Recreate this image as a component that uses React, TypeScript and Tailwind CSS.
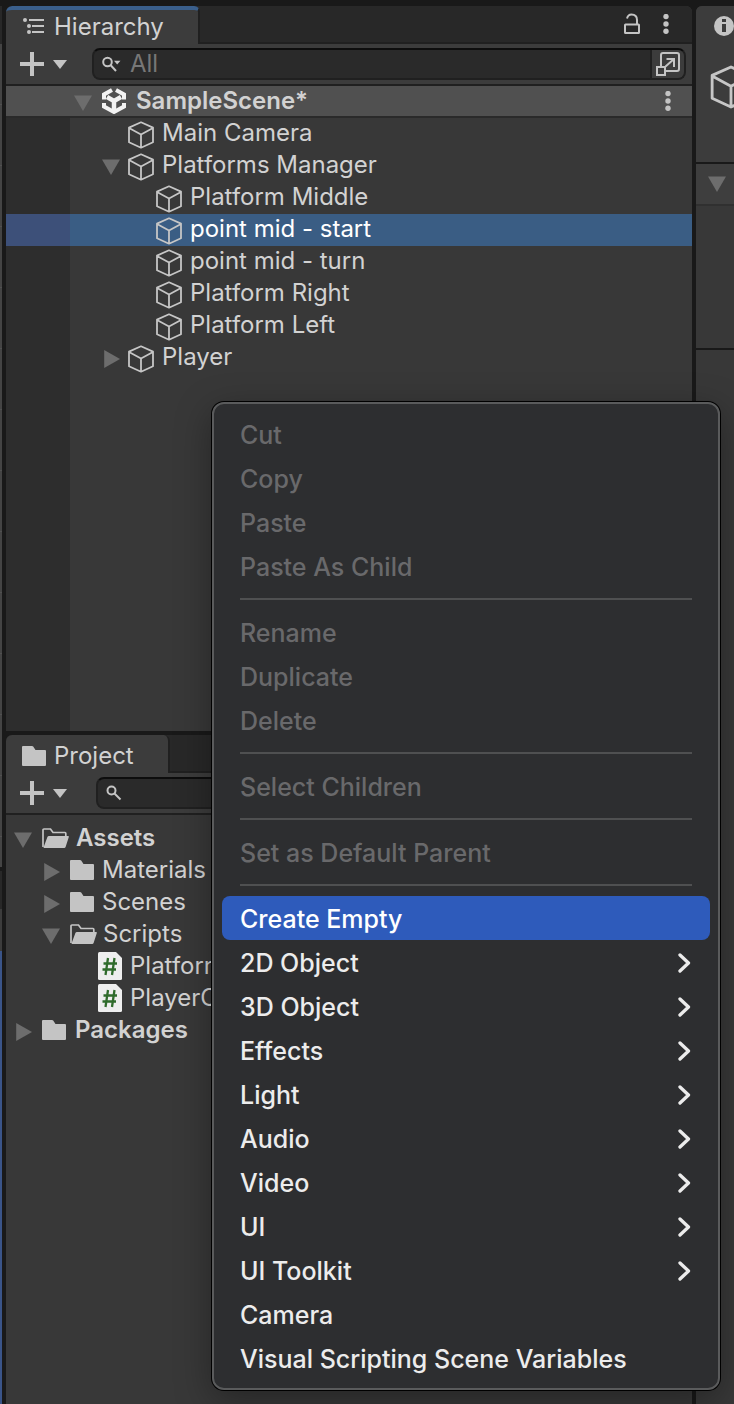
import type { ReactNode } from "react";

function Caret({ open, className = "" }: { open: boolean; className?: string }) {
  return (
    <svg viewBox="0 0 18 18" className={`size-[18px] shrink-0 fill-[#6d6d6d] ${className}`} aria-hidden="true">
      <path d={open ? "M0 1.5h18L9 17z" : "M2.2 0v18L18 9z"} />
    </svg>
  );
}

function Cube({ className }: { className: string }) {
  return (
    <svg viewBox="0 0 28 28" className={`shrink-0 ${className}`} fill="none" stroke="#c6c6c6" strokeWidth="1.8" strokeLinejoin="round" aria-hidden="true">
      <path d="M14 1.3 26 6.6v14.6L14 26.7 2 21.2V6.6zM2 7l12 6.500L26 7M14 13.500v13" />
    </svg>
  );
}

function Folder() {
  return (
    <svg viewBox="0 0 26 22" className="h-[22px] w-[26px] shrink-0" fill="#c4c4c4" aria-hidden="true">
      <path d="M2 1h9q.8 0 1.200.6L14.500 5H24q1 0 1 1v14q0 1-1 1H2q-1 0-1-1V2q0-1 1-1z" />
    </svg>
  );
}

function FolderOpen() {
  return (
    <svg viewBox="0 0 28 22" className="h-[22px] w-7 shrink-0" aria-hidden="true">
      <path d="M2 20V3q0-1 1-1h6.500l2.500 3.500H24q.8 0 .8 1V9" fill="none" stroke="#c4c4c4" strokeWidth="1.700" />
      <path d="M8 9h19q1.200 0 .8 1.100L24.600 20q-.4 1-1.400 1H3.500q-1.200 0-.8-1.100L6.400 10Q6.800 9 8 9z" fill="#c4c4c4" />
    </svg>
  );
}

function Script() {
  return (
    <svg viewBox="0 0 24 28" className="h-7 w-6 shrink-0" aria-hidden="true">
      <path d="M1.500 0H18l6 6v20.500q0 1.500-1.500 1.500h-21Q0 28 0 26.500v-25Q0 0 1.500 0z" fill="#eeeeee" />
      <path d="M10 6 7.500 23M16.500 6 14 23M5.500 11.500H19M4.500 17.500H18" fill="none" stroke="#2f6b2b" strokeWidth="2.300" />
    </svg>
  );
}

function Kebab() {
  return (
    <svg viewBox="0 0 6 20" className="h-5 w-[6px] fill-[#c4c4c4]" aria-hidden="true">
      <circle cx="3" cy="2.500" r="2.700" />
      <circle cx="3" cy="10" r="2.700" />
      <circle cx="3" cy="17.300" r="2.700" />
    </svg>
  );
}

function AddButton() {
  return (
    <button type="button" aria-label="Add" className="flex h-8 items-center gap-[9px]">
      <svg viewBox="0 0 24 24" className="size-6 fill-[#c4c4c4]" aria-hidden="true">
        <path d="M10 0h4v10h10v4H14v10h-4V14H0v-4h10z" />
      </svg>
      <svg viewBox="0 0 14 9" className="h-[9px] w-[14px] fill-[#c4c4c4]" aria-hidden="true">
        <path d="M0 0h14L7 9z" />
      </svg>
    </button>
  );
}

function TreeRow({
  level,
  caret,
  icon,
  label,
  bold = false,
  selected = false,
}: {
  level: string;
  caret?: "open" | "closed";
  icon: ReactNode;
  label: string;
  bold?: boolean;
  selected?: boolean;
}) {
  return (
    <li className={`flex h-8 items-center ${level} ${selected ? "bg-[#3a5d84] text-white" : ""}`}>
      <span className="flex w-7 shrink-0 items-center">
        {caret && <Caret open={caret === "open"} className="mt-1" />}
      </span>
      {icon}
      <span className={`whitespace-nowrap ${bold ? "font-semibold" : ""}`}>{label}</span>
    </li>
  );
}

const objects: { label: string; level: string; caret?: "open" | "closed"; selected?: boolean }[] = [
  { label: "Main Camera", level: "pb-[2px] pl-8" },
  { label: "Platforms Manager", level: "pb-[2px] pl-8", caret: "open" },
  { label: "Platform Middle", level: "pb-[2px] pl-[60px]" },
  { label: "point mid - start", level: "pb-[2px] pl-[60px]", selected: true },
  { label: "point mid - turn", level: "pb-[2px] pl-[60px]" },
  { label: "Platform Right", level: "pb-[2px] pl-[60px]" },
  { label: "Platform Left", level: "pb-[2px] pl-[60px]" },
  { label: "Player", level: "pb-[2px] pl-8", caret: "closed" },
];

const menu: { items: string[]; disabled?: boolean }[] = [
  { items: ["Cut", "Copy", "Paste", "Paste As Child"], disabled: true },
  { items: ["Rename", "Duplicate", "Delete"], disabled: true },
  { items: ["Select Children"], disabled: true },
  { items: ["Set as Default Parent"], disabled: true },
  {
    items: [
      "Create Empty",
      "2D Object",
      "3D Object",
      "Effects",
      "Light",
      "Audio",
      "Video",
      "UI",
      "UI Toolkit",
      "Camera",
      "Visual Scripting Scene Variables",
    ],
  },
];
const submenus = ["2D Object", "3D Object", "Effects", "Light", "Audio", "Video", "UI", "UI Toolkit"];

function HierarchyPanel() {
  return (
    <section className="flex min-h-0 flex-[725] flex-col overflow-hidden rounded-t-md bg-[#383838]">
      <header className="flex h-[38px] shrink-0 bg-[#282828]">
        <h2 className="flex w-[194px] items-center gap-2 rounded-t-md border-t-4 border-r-2 border-t-[#3a5f8c] border-r-[#202020] bg-[#3c3c3c] pl-4">
          <svg viewBox="0 0 24 18" className="h-[18px] w-6" fill="#c4c4c4" aria-hidden="true">
            <circle cx="3" cy="2" r="2" />
            <circle cx="7" cy="8" r="2" />
            <circle cx="7" cy="14" r="2" />
            <path d="M7 1h15v2H7zM10 7h12v2H10zM10 13h12v2H10z" />
          </svg>
          Hierarchy
        </h2>
        <div className="flex flex-1 items-center justify-end gap-[22px] border-b-2 border-[#202020] pr-[23px]">
          <button type="button" aria-label="Lock">
            <svg viewBox="0 0 18 22" className="h-[22px] w-[18px]" fill="none" stroke="#c4c4c4" strokeWidth="2" aria-hidden="true">
              <rect x="2" y="11.500" width="14" height="8.500" rx="0.500" />
              <path d="M4 5.500Q5 1.500 8.500 1.500 14 1.500 14 7v4.500" />
            </svg>
          </button>
          <button type="button" aria-label="Hierarchy options">
            <Kebab />
          </button>
        </div>
      </header>
      <div className="flex h-[42px] shrink-0 items-center border-b-2 border-[#202020] bg-[#3c3c3c] pr-[6px] pl-[14px]">
        <AddButton />
        <label className="ml-[25px] flex h-8 min-w-0 flex-1 items-center overflow-hidden rounded-lg border-2 border-[#202020] border-t-[#0d0d0d] bg-[#2a2a2a] pl-2">
          <svg viewBox="0 0 20 18" className="h-[18px] w-5 shrink-0" aria-hidden="true">
            <g fill="none" stroke="#c4c4c4" strokeWidth="2">
              <circle cx="5.500" cy="7" r="4.300" />
              <path d="m8.500 10 5.500 6" />
            </g>
            <path d="M12 5.800h6.500L15.200 9.500z" fill="#c4c4c4" />
          </svg>
          <span className="sr-only">Search hierarchy</span>
          <input type="search" placeholder="All" className="ml-2 h-8 min-w-0 flex-1 bg-transparent outline-none placeholder:text-[#777777]" />
          <button type="button" aria-label="Open search window" className="flex h-full w-[34px] shrink-0 items-center justify-center border-l-2 border-[#202020] bg-[#3c3c3c]">
            <svg viewBox="0 0 24 24" className="size-6" fill="none" stroke="#c4c4c4" strokeWidth="2" aria-hidden="true">
              <path d="M5 14V3q0-2 2-2h14q2 0 2 2v14q0 2-2 2H10" />
              <path d="M1 15h8v8H1zM9.500 14.500 18 7M10.500 7H18v8" />
            </svg>
          </button>
        </label>
      </div>
      <div className="flex h-8 shrink-0 items-center border-b-2 border-[#2a2a2a] bg-[#505050] pr-[21px] pl-[68px] font-semibold">
        <Caret open className="mt-1" />
        <svg viewBox="0 0 26 26" className="mr-[9px] ml-[9px] size-[26px]" aria-hidden="true">
          <g fill="none" stroke="#f2f2f2">
            <path d="M13 12.500V24M13 13 6 9M13 13l7-4" strokeWidth="4.500" />
            <path d="M11 2 3 6.500v5M15 2l8 4.500v5M3 15v3.500L13 24l10-5.500V15" strokeWidth="4" />
          </g>
        </svg>
        <span className="flex-1">SampleScene*</span>
        <button type="button" aria-label="Scene options">
          <Kebab />
        </button>
      </div>
      <div className="flex flex-1">
        <div className="w-16 bg-[#2d2d2d] pt-24">
          <div className="h-8 bg-[#3d5079]" />
        </div>
        <ul className="min-w-0 flex-1">
          {objects.map((object) => (
            <TreeRow key={object.label} {...object} icon={<Cube className="mt-1 mr-[7px] -ml-[3px] size-7" />} />
          ))}
        </ul>
      </div>
    </section>
  );
}

function ProjectPanel() {
  return (
    <section className="flex min-h-0 flex-[669] flex-col overflow-hidden rounded-t-md bg-[#383838]">
      <header className="flex h-[38px] shrink-0 bg-[#282828]">
        <h2 className="flex w-[164px] items-center gap-[7px] rounded-t-md border-r-2 border-[#202020] bg-[#3c3c3c] pt-1 pl-[15px]">
          <Folder />
          Project
        </h2>
        <div className="flex-1 border-b-2 border-[#202020]" />
      </header>
      <div className="flex h-[42px] shrink-0 items-center border-b-2 border-[#202020] bg-[#3c3c3c] pr-[6px] pl-[14px]">
        <AddButton />
        <label className="ml-[29px] flex h-8 flex-1 items-center rounded-lg border-2 border-[#202020] border-t-[#0d0d0d] bg-[#2a2a2a] pl-2">
          <svg viewBox="0 0 16 16" className="size-4" fill="none" stroke="#c4c4c4" strokeWidth="2" aria-hidden="true">
            <circle cx="5.500" cy="5.500" r="4" />
            <path d="m8.500 8.500 6 6" />
          </svg>
          <span className="sr-only">Search project</span>
          <input type="search" className="ml-2 h-7 min-w-0 flex-1 bg-transparent outline-none" />
        </label>
      </div>
      <ul className="pt-[7px]">
        <TreeRow level="gap-[7px] pl-2 [&>span:first-child]:w-5" caret="open" icon={<FolderOpen />} label="Assets" bold />
        <TreeRow level="gap-[7px] pl-9 [&>span:first-child]:w-5" caret="closed" icon={<Folder />} label="Materials" />
        <TreeRow level="gap-[7px] pl-9 [&>span:first-child]:w-5" caret="closed" icon={<Folder />} label="Scenes" />
        <TreeRow level="gap-[6px] pl-9 [&>span:first-child]:w-[21px]" caret="open" icon={<FolderOpen />} label="Scripts" />
        <TreeRow level="gap-2 pl-14" icon={<Script />} label="PlatformMovement" />
        <TreeRow level="gap-2 pl-14" icon={<Script />} label="PlayerController" />
        <TreeRow level="gap-2 pl-2 [&>span:first-child]:w-[19px]" caret="closed" icon={<Folder />} label="Packages" bold />
      </ul>
    </section>
  );
}

function Inspector() {
  return (
    <aside className="w-[38px] shrink-0 overflow-hidden rounded-tl-md bg-[#383838]">
      <div className="h-[158px] border-b-2 border-[#191919] bg-[#3c3c3c] pt-[10px] pl-[18px]">
        <svg viewBox="0 0 20 20" className="size-5" aria-hidden="true">
          <circle cx="10" cy="10" r="10" fill="#c4c4c4" />
          <path d="M8 3h4v3H8zM8 8h4v8H8z" fill="#3c3c3c" />
        </svg>
        <Cube className="mt-[29px] -ml-[5px] size-[44px]" />
      </div>
      <div className="flex h-[42px] items-center border-b-2 border-[#303030] bg-[#3e3e3e] pl-3">
        <Caret open />
      </div>
      <div className="h-[144px] border-b-2 border-[#191919]" />
    </aside>
  );
}

function ContextMenu() {
  return (
    <div
      role="menu"
      className="absolute top-[402px] left-[212px] w-[508px] rounded-xl border-2 border-[#5a5b5c] bg-[#2d2e30] p-2 text-[25px] font-medium text-[#ececec] shadow-[0_0_0_1px_#000000,0_10px_36px_rgba(0,0,0,0.35)]"
    >
      {menu.map((group, index) => (
        <div key={group.items[0]} role="group">
          {index > 0 && <hr className="mx-[18px] my-[10px] border-t-2 border-[#4f5051]" />}
          {group.items.map((item) => (
            <button
              key={item}
              type="button"
              role="menuitem"
              disabled={group.disabled}
              className={`flex h-11 w-full items-center justify-between rounded-lg pt-[2px] pr-[19px] pl-[18px] text-left whitespace-nowrap disabled:text-[#69696b] ${item === "Create Empty" ? "bg-[#2e5bbb] text-white" : ""}`}
            >
              {item}
              {submenus.includes(item) && (
                <svg viewBox="0 0 14 20" className="h-5 w-[14px]" fill="none" stroke="#ececec" strokeWidth="3.300" strokeLinecap="round" strokeLinejoin="round" aria-hidden="true">
                  <path d="m3 2 8.500 8L3 18" />
                </svg>
              )}
            </button>
          ))}
        </div>
      ))}
    </div>
  );
}

export default function App() {
  return (
    <div className="relative flex min-h-screen gap-1 overflow-hidden bg-[#191919] pt-[6px] font-[Inter,sans-serif] text-2xl leading-8 text-[#d2d2d2]">
      <div className="flex w-[2px] shrink-0 flex-col bg-[#444444]">
        <div className="h-[38px] bg-[#282828]" />
        <div className="h-[823px] bg-[repeating-linear-gradient(to_bottom,#444444_0,#444444_60px,#505050_60px,#505050_61px)]" />
        <div className="h-1 bg-[#191919]" />
        <div className="h-[38px] bg-[#282828]" />
        <div className="h-[42px] bg-[#3c3c3c]" />
        <div className="flex-1 bg-[#3a5488]" />
      </div>
      <main className="flex min-w-0 flex-1 flex-col gap-1">
        <HierarchyPanel />
        <ProjectPanel />
      </main>
      <Inspector />
      <ContextMenu />
    </div>
  );
}
